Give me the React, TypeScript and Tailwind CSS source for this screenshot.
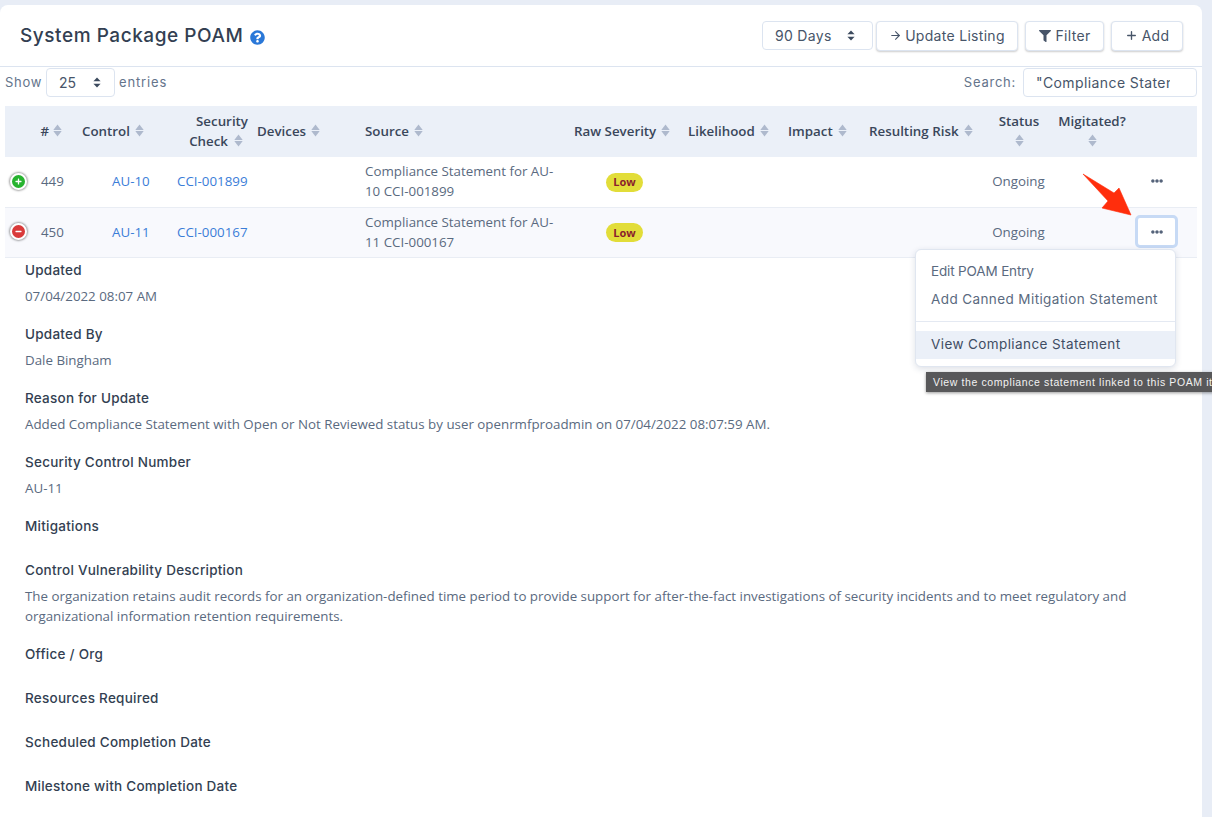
import React from "react";
import { FaQuestionCircle, FaFilter, FaEllipsisH, FaPlus, FaMinus } from "react-icons/fa";
import { ArrowRight, Plus } from "lucide-react";

const head = "[font-family:'Open_Sans',sans-serif]";
const title = "[font-family:Inter,sans-serif]";

function Sort({ className = "" }: { className?: string }) {
  return (
    <svg width="9" height="13" viewBox="0 0 9 13" className={"inline-block shrink-0 " + className}>
      <path d="M4.5 0.5 L8.7 5.9 L0.3 5.9 Z" fill="#aeb9cd" />
      <path d="M4.5 12.5 L8.7 7.1 L0.3 7.1 Z" fill="#aeb9cd" />
    </svg>
  );
}

function SelectArrows() {
  return (
    <svg width="8" height="11" viewBox="0 0 8 11" className="shrink-0">
      <path d="M4 0.5 L7.6 4.3 L0.4 4.3 Z" fill="#3c4a5e" />
      <path d="M4 10.5 L7.6 6.7 L0.4 6.7 Z" fill="#3c4a5e" />
    </svg>
  );
}

const grid = "grid grid-cols-[67px_98px_80px_108px_208px_114px_100px_80px_120px_70px_70px_77px]";

function Th({ children, className = "" }: { children: React.ReactNode; className?: string }) {
  return <div className={"flex items-center text-[13.33px] leading-[20px] font-semibold text-[#3a475b] " + className}>{children}</div>;
}

function Row({ n, ctl, cci, src1, src2, minus, striped }: { n: string; ctl: string; cci: string; src1: string; src2: string; minus?: boolean; striped?: boolean }) {
  return (
    <div className={grid + " items-center pb-[2px] text-[13.33px] leading-[20px] text-[#5a6a80] border-b border-[#e9edf4] " + (striped ? "h-[50px] bg-[#f8f9fd]" : "h-[51px] bg-white")}>
      <div className="flex items-center pl-[5px] gap-[14px]">
        <span className={"flex items-center justify-center w-[17px] h-[17px] rounded-full border-2 border-white text-white shadow-[0_0_2px_1px_rgba(0,0,0,0.35)] " + (minus ? "bg-[#d93a3a]" : "bg-[#27b32f]")}>
          {minus ? <FaMinus size={7} /> : <FaPlus size={7} />}
        </span>
        <span>{n}</span>
      </div>
      <div className="pl-[40px] text-[#3b7dd8]">{ctl}</div>
      <div className="pl-[7px] text-[#3b7dd8] whitespace-nowrap">{cci}</div>
      <div />
      <div className="pl-[7px] whitespace-nowrap">
        <div>{src1}</div>
        <div>{src2}</div>
      </div>
      <div className="flex justify-center pl-[3px] mt-[2px]">
        <span className="inline-flex items-center justify-center w-[37px] h-[19px] rounded-full bg-[#e2dd39] text-[#8a1f2d] text-[11px] font-bold">Low</span>
      </div>
      <div />
      <div />
      <div />
      <div className="text-center pl-[7px]">Ongoing</div>
      <div />
      <div className="flex justify-center pr-[4px]">
        <span className={"flex items-center justify-center text-[#55637a] " + (minus ? "w-[43px] h-[33px] rounded-[5px] border-[3px] border-[#c7daf5] bg-white" : "w-[43px] h-[33px]")}>
          <FaEllipsisH size={12} />
        </span>
      </div>
    </div>
  );
}

function Detail({ label, value }: { label: string; value?: React.ReactNode }) {
  return (
    <div className="pb-[18px]">
      <div className={title + " text-[13.5px] leading-[20px] font-medium text-[#333f52] mb-[6px] tracking-[0.25px]"}>{label}</div>
      {value && <div className="text-[13.33px] leading-[20px] text-[#5a6a80] max-w-[1120px]">{value}</div>}
    </div>
  );
}

export default function App() {
  return (
    <div className={head + " relative h-[817px] w-[1212px] overflow-hidden bg-[#e8edf6] pt-[5px]"}>
      <div className="relative w-[1202px] h-[830px] rounded-t-[8px] rounded-r-[8px] bg-white">
        {/* title bar */}
        <div className="flex items-center justify-between h-[62px] pl-[20px] pr-[19px] border-b border-[#dce4f0]">
          <div className="flex items-center gap-[7px] pt-[2px]">
            <h1 className={title + " text-[19px] font-medium text-[#333f52] tracking-[0.55px]"}>System Package POAM</h1>
            <FaQuestionCircle size={15} className="text-[#2a78d8] mt-[2px]" />
          </div>
          <div className={title + " flex items-center text-[14px] text-[#475569] tracking-[0.3px]"}>
            <div className="flex items-center justify-between w-[111px] h-[29px] pl-[12px] pr-[17px] mr-[3px] rounded-[4px] border border-[#dce4f0] bg-white">
              <span>90 Days</span>
              <SelectArrows />
            </div>
            <button className="flex items-center gap-[3px] h-[30px] w-[142px] justify-center mr-[7px] rounded-[4px] border border-[#dce4f0] bg-white shadow-[0_1px_2px_rgba(0,0,0,0.2)]">
              <ArrowRight size={13} />
              <span>Update Listing</span>
            </button>
            <button className="flex items-center gap-[5px] h-[30px] w-[79px] justify-center mr-[7px] rounded-[4px] border border-[#dce4f0] bg-white shadow-[0_1px_2px_rgba(0,0,0,0.2)]">
              <FaFilter size={12} />
              <span>Filter</span>
            </button>
            <button className="flex items-center gap-[4px] h-[30px] w-[72px] justify-center rounded-[4px] border border-[#dce4f0] bg-white shadow-[0_1px_2px_rgba(0,0,0,0.2)]">
              <Plus size={13} strokeWidth={2.5} />
              <span>Add</span>
            </button>
          </div>
        </div>

        {/* toolbar */}
        <div className="flex items-center justify-between h-[31px] pl-[5px] pr-[5px] mb-[8px] text-[13px] text-[#64748b]">
          <div className="flex items-center">
            <span className={title + " tracking-[0.7px]"}>Show</span>
            <div className={title + " flex items-center justify-between w-[69px] h-[29px] ml-[4px] mr-[4px] pl-[12px] pr-[13px] rounded-[4px] border border-[#dce4f0] text-[14px] text-[#475569]"}>
              <span>25</span>
              <SelectArrows />
            </div>
            <span className={title + " tracking-[0.85px]"}>entries</span>
          </div>
          <div className="flex items-center">
            <span className={title + " tracking-[0.75px] mr-[7px]"}>Search:</span>
            <div className={title + " w-[174px] h-[29px] pl-[12px] pr-[26px] flex items-center rounded-[4px] border border-[#dce4f0] text-[14px] text-[#475569] overflow-hidden whitespace-nowrap tracking-[0.4px]"}>
              <span className="block overflow-hidden">"Compliance Statement</span>
            </div>
          </div>
        </div>

        {/* table */}
        <div className="w-[1192px] ml-[5px]">
          <div className={grid + " h-[51px] pb-[2px] items-center bg-[#ebf0f8]"}>
            <Th className="justify-end gap-[4px] pr-[10px]"># <Sort /></Th>
            <Th className="pl-[10px] gap-[5px]">Control <Sort /></Th>
            <Th className="flex-col !items-end pr-[2px]">
              <span>Security</span>
              <span className="flex items-center gap-[6px] pr-[5px]">Check <Sort /></span>
            </Th>
            <Th className="pl-[7px] gap-[5px]">Devices <Sort /></Th>
            <Th className="pl-[7px] gap-[5px]">Source <Sort /></Th>
            <Th className="pl-[8px] gap-[5px] whitespace-nowrap">Raw Severity <Sort /></Th>
            <Th className="pl-[8px] gap-[5px]">Likelihood <Sort /></Th>
            <Th className="pl-[8px] gap-[5px]">Impact <Sort /></Th>
            <Th className="pl-[9px] gap-[5px] whitespace-nowrap">Resulting Risk <Sort /></Th>
            <Th className="flex-col pl-[8px]">
              <span>Status</span>
              <span className="flex h-[20px] items-center"><Sort /></span>
            </Th>
            <Th className="flex-col pl-[14px] whitespace-nowrap">
              <span>Migitated?</span>
              <span className="flex h-[20px] items-center"><Sort /></span>
            </Th>
            <div />
          </div>
          <Row n="449" ctl="AU-10" cci="CCI-001899" src1="Compliance Statement for AU-" src2="10 CCI-001899" />
          <Row n="450" ctl="AU-11" cci="CCI-000167" src1="Compliance Statement for AU-" src2="11 CCI-000167" minus striped />
        </div>

        {/* details */}
        <div className="pl-[25px] pt-[2px]">
          <Detail label="Updated" value="07/04/2022 08:07 AM" />
          <Detail label="Updated By" value="Dale Bingham" />
          <Detail label="Reason for Update" value="Added Compliance Statement with Open or Not Reviewed status by user openrmfproadmin on 07/04/2022 08:07:59 AM." />
          <Detail label="Security Control Number" value="AU-11" />
          <Detail label="Mitigations" />
          <Detail label="Control Vulnerability Description" value="The organization retains audit records for an organization-defined time period to provide support for after-the-fact investigations of security incidents and to meet regulatory and organizational information retention requirements." />
          <Detail label="Office / Org" />
          <Detail label="Resources Required" />
          <Detail label="Scheduled Completion Date" />
          <Detail label="Milestone with Completion Date" />
        </div>
      </div>

      {/* dropdown menu */}
      <div className={title + " absolute left-[915px] top-[249px] w-[261px] h-[118px] rounded-[6px] border border-[#e0e6f0] bg-white pt-[7px] text-[13.5px] text-[#5a6a80] shadow-[0_2px_6px_rgba(30,50,90,0.15)] tracking-[0.4px]"}>
        <div className="h-[28px] flex items-center pl-[15px] tracking-[-0.15px]">Edit POAM Entry</div>
        <div className="h-[28px] flex items-center pl-[15px]">Add Canned Mitigation Statement</div>
        <div className="border-t border-[#e4e9f2] mt-[8px] mb-[9px]" />
        <div className="h-[28px] flex items-center pl-[15px] pb-[2px] bg-[#ebf0f8] text-[#3f4d63]">View Compliance Statement</div>
      </div>

      {/* tooltip */}
      <div className="absolute left-[926px] top-[372px] h-[20px] w-[300px] flex items-center pl-[7px] pt-[1px] bg-[#58585a] text-[#f2f2f2] text-[10.5px] font-medium whitespace-nowrap [font-family:'Liberation_Sans',sans-serif] tracking-[0.6px] shadow-[0_1px_3px_rgba(0,0,0,0.4)]">
        View the compliance statement linked to this POAM item
      </div>

      {/* annotation arrow */}
      <svg className="absolute left-[1080px] top-[170px]" width="56" height="50" viewBox="1080 170 56 50">
        <path d="M1083 174 L1114 193 L1119 188 L1131 215 L1102 208 L1108 201 Z" fill="#ff2e0c" stroke="#ff2e0c" strokeWidth="0.6" strokeLinejoin="round" />
      </svg>
    </div>
  );
}
